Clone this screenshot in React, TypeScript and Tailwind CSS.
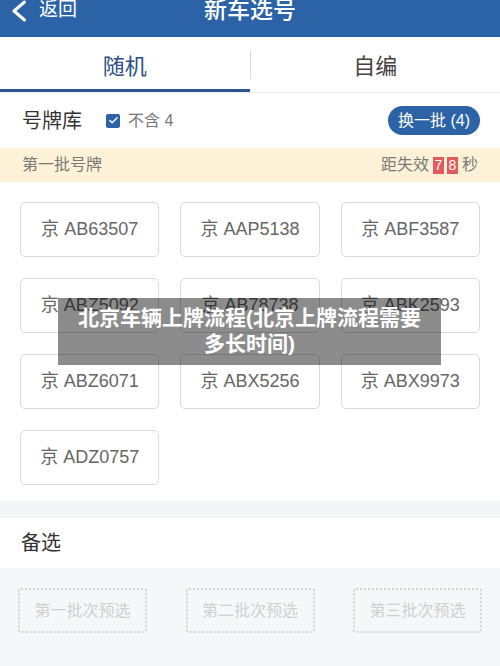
import { Check } from "lucide-react";

const plates = [
  "AB63507",
  "AAP5138",
  "ABF3587",
  "ABZ5092",
  "AB78738",
  "ABK2593",
  "ABZ6071",
  "ABX5256",
  "ABX9973",
  "ADZ0757",
];

const backups = ["第一批次预选", "第二批次预选", "第三批次预选"];

export default function App() {
  return (
    <div
      className="relative w-[500px] h-[666px] overflow-hidden bg-white"
      style={{ fontFamily: '"Liberation Sans", "Noto Sans CJK SC", sans-serif' }}
    >
      {/* Top bar */}
      <div className="relative flex h-[37px] items-start bg-[#2c63a7] text-white">
        <div className="flex items-start pl-[11px]">
          <svg width="16" height="22" viewBox="0 0 16 22" className="mt-[0px]">
            <path d="M13.5 2 L3 11 L13.5 20" fill="none" stroke="white" strokeWidth="3" strokeLinecap="round" strokeLinejoin="round" />
          </svg>
          <span className="ml-[12px] mt-[-1px] text-[19px] leading-[22px]">返回</span>
        </div>
        <div className="absolute left-0 right-0 top-[-2px] text-center text-[23px] font-medium leading-[24px]">
          新车选号
        </div>
      </div>

      {/* Tabs */}
      <div className="flex h-[56px] border-b border-[#ececec]">
        <div className="flex flex-1 items-center justify-center border-b-[3px] border-[#2b5592] pt-[6px] text-[22px] text-[#2b4f85]">
          随机
        </div>
        <div className="my-[13px] w-px bg-[#d9d9d9]" />
        <div className="flex flex-1 items-center justify-center pt-[3px] text-[22px] text-[#444]">
          自编
        </div>
      </div>

      {/* Plate library header */}
      <div className="flex h-[55px] items-center px-[22px]">
        <span className="text-[20px] text-[#333]">号牌库</span>
        <span className="ml-[24px] flex h-[14px] w-[14px] items-center justify-center rounded-[2px] bg-[#2c63a7]">
          <Check className="h-[11px] w-[11px] text-white" strokeWidth={3} />
        </span>
        <span className="ml-[8px] text-[16px] text-[#777]">不含 4</span>
        <button className="ml-auto mr-[-2px] h-[29px] rounded-full bg-[#2c63a7] px-[10px] text-[16px] text-white">
          换一批 (4)
        </button>
      </div>

      {/* Batch strip */}
      <div className="flex h-[34px] items-center justify-between bg-[#fdf2d7] px-[22px] text-[16px] text-[#7a7a7a]">
        <span>第一批号牌</span>
        <div className="flex items-center">
          <span>距失效</span>
          <span className="ml-[4px] flex h-[17px] w-[11px] items-center justify-center bg-[#e35a5e] text-[14px] text-white">7</span>
          <span className="ml-[3px] flex h-[17px] w-[11px] items-center justify-center bg-[#e35a5e] text-[14px] text-white">8</span>
          <span className="ml-[4px]">秒</span>
        </div>
      </div>

      {/* Plates grid */}
      <div className="grid grid-cols-3 gap-x-[21px] gap-y-[21px] px-[20px] pt-[20px] pb-[16px]">
        {plates.map((p) => (
          <div
            key={p}
            className="flex h-[55px] items-center justify-center rounded-[5px] border border-[#dadada] text-[18px] text-[#666]"
          >
            京 {p}
          </div>
        ))}
      </div>

      <div className="h-[17px] bg-[#f3f6f6]" />

      {/* Backup */}
      <div className="flex h-[50px] items-center px-[21px] text-[20px] text-[#333]">备选</div>
      <div className="flex h-[120px] items-start justify-between bg-[#f5f7f8] px-[18px] pt-[20px]">
        {backups.map((b) => (
          <div
            key={b}
            className="flex h-[45px] w-[129px] items-center justify-center rounded-[3px] border-2 border-dotted border-[#d4d4d4] text-[16px] text-[#d0d0d0]"
          >
            {b}
          </div>
        ))}
      </div>

      {/* Caption overlay */}
      <div className="absolute left-[58px] top-[298px] w-[383px] bg-black/45 px-[10px] pt-[7px] pb-[8px] text-center text-[21px] font-bold leading-[26px] text-white">
        北京车辆上牌流程(北京上牌流程需要多长时间)
      </div>
    </div>
  );
}
